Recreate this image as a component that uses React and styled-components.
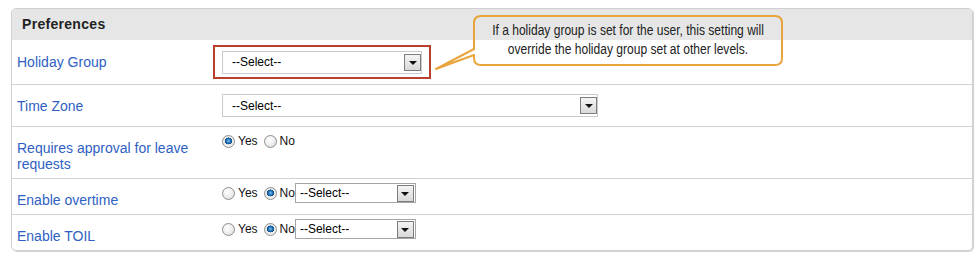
import React from 'react'
import styled, { createGlobalStyle } from 'styled-components'

const GlobalStyle = createGlobalStyle`
  html, body {
    margin: 0;
    padding: 0;
    background: #fff;
  }
  body {
    font-family: 'Liberation Sans', Arial, sans-serif;
  }
`

const Page = styled.div`
  position: relative;
  padding: 8px 0 0 11px;
  width: 977px;
  height: 263px;
  box-sizing: border-box;
`

const Panel = styled.div`
  width: 962px;
  box-sizing: border-box;
  border: 1px solid #cfcfcf;
  border-radius: 5px;
  overflow: hidden;
  box-shadow: 1px 1px 1px rgba(0, 0, 0, 0.18);
`

const Header = styled.div`
  height: 31px;
  line-height: 31px;
  padding-left: 10px;
  background: #e6e6e6;
  font-size: 14px;
  font-weight: bold;
  color: #222;
  letter-spacing: 0.3px;
`

const Row = styled.div`
  display: grid;
  grid-template-columns: 201px 1fr;
  height: ${(p) => p.$h}px;
  border-bottom: ${(p) => (p.$last ? 'none' : '1px solid #d2d2d2')};
`

const Label = styled.div`
  align-self: center;
  padding: ${(p) => p.$shift || 0}px 0 0 5px;
  font-size: 14px;
  line-height: 16px;
  color: #2f5fc4;
`

const Control = styled.div`
  display: flex;
  align-items: center;
  align-self: ${(p) => (p.$top ? 'start' : 'center')};
  padding-top: ${(p) => (p.$top ? 4 : 0)}px;
  padding-left: ${(p) => (p.$flush ? 0 : 9)}px;
  min-height: 20px;
`

const Highlight = styled.div`
  display: flex;
  align-items: center;
  width: 218px;
  height: 34px;
  box-sizing: border-box;
  border: 2px solid #b8402c;
  padding: 0 7px;
`

const SelectBox = styled.div`
  display: flex;
  align-items: center;
  justify-content: space-between;
  box-sizing: border-box;
  width: ${(p) => p.$w}px;
  height: ${(p) => p.$h}px;
  border: 1px solid ${(p) => (p.$dark ? '#a5a5a5' : '#cbcbcb')};
  background: #fff;
  padding: 0 ${(p) => (p.$dark ? 1 : 0)}px 0 ${(p) => (p.$dark ? 4 : 9)}px;
  font-size: 12px;
  color: #000;
`

const Arrow = styled.span`
  display: flex;
  align-items: center;
  justify-content: center;
  width: 17px;
  height: 17px;
  box-sizing: border-box;
  border: 1px solid #7d7d7d;
  background: linear-gradient(#f4f4f4, #d9d9d9);
  &::after {
    content: '';
    border-left: 4px solid transparent;
    border-right: 4px solid transparent;
    border-top: 4px solid #111;
    margin-top: 1px;
  }
`

const Option = styled.label`
  display: inline-flex;
  align-items: center;
  font-size: 12px;
  color: #111;
  margin-right: ${(p) => p.$gap || 0}px;
`

const Radio = styled.span`
  display: inline-block;
  width: 13px;
  height: 13px;
  box-sizing: border-box;
  border-radius: 50%;
  border: 1px solid #8e8e8e;
  margin-right: 3px;
  background: ${(p) =>
    p.$on
      ? 'radial-gradient(circle at 50% 45%, #7fc2f0 0, #1f6fb5 2.2px, #0f4f86 3.4px, #e9e9e9 3.6px, #f7f7f7 100%)'
      : 'radial-gradient(circle at 40% 35%, #ffffff 0, #ececec 55%, #d2d2d2 100%)'};
`

const Callout = styled.div`
  position: absolute;
  left: 0;
  top: 0;
  width: 977px;
  height: 80px;
  pointer-events: none;
`

const CalloutText = styled.div`
  position: absolute;
  left: 441px;
  top: 21px;
  width: 374px;
  text-align: center;
  font-family: 'Liberation Sans', Arial, sans-serif;
  font-size: 14px;
  line-height: 19px;
  color: #222;
  transform: scaleX(0.86);
  transform-origin: 50% 0;
`

const Select = ({ w, h, dark }) => (
  <SelectBox $w={w} $h={h} $dark={dark}>
    <span>--Select--</span>
    <Arrow />
  </SelectBox>
)

const Radios = ({ yes }) => (
  <>
    <Option $gap={6}>
      <Radio $on={yes} />
      Yes
    </Option>
    <Option>
      <Radio $on={!yes} />
      No
    </Option>
  </>
)

const App = () => {
  return (
    <Page>
      <GlobalStyle />
      <Panel>
        <Header>Preferences</Header>
        <Row $h={44}>
          <Label>Holiday Group</Label>
          <Control $flush>
            <Highlight>
              <Select w={200} h={23} />
            </Highlight>
          </Control>
        </Row>
        <Row $h={41}>
          <Label>Time Zone</Label>
          <Control>
            <Select w={376} h={23} />
          </Control>
        </Row>
        <Row $h={51}>
          <Label $shift={6}>Requires approval for leave requests</Label>
          <Control $top>
            <Radios yes />
          </Control>
        </Row>
        <Row $h={35}>
          <Label $shift={6}>Enable overtime</Label>
          <Control $top>
            <Radios />
            <Select w={121} h={20} dark />
          </Control>
        </Row>
        <Row $h={35} $last>
          <Label $shift={6}>Enable TOIL</Label>
          <Control $top>
            <Radios />
            <Select w={121} h={20} dark />
          </Control>
        </Row>
      </Panel>
      <Callout>
        <svg width='977' height='80'>
          <path
            d='M481 16 H775 Q782 16 782 23 V58 Q782 65 775 65 H481 Q474 65 474 58 V55 L436 69 L474 49 V23 Q474 16 481 16 Z'
            fill='none'
            stroke='#e8a53d'
            strokeWidth='2'
            strokeLinejoin='round'
          />
        </svg>
        <CalloutText>
          If a holiday group is set for the user, this setting will
          <br />
          override the holiday group set at other levels.
        </CalloutText>
      </Callout>
    </Page>
  )
}

export default App
